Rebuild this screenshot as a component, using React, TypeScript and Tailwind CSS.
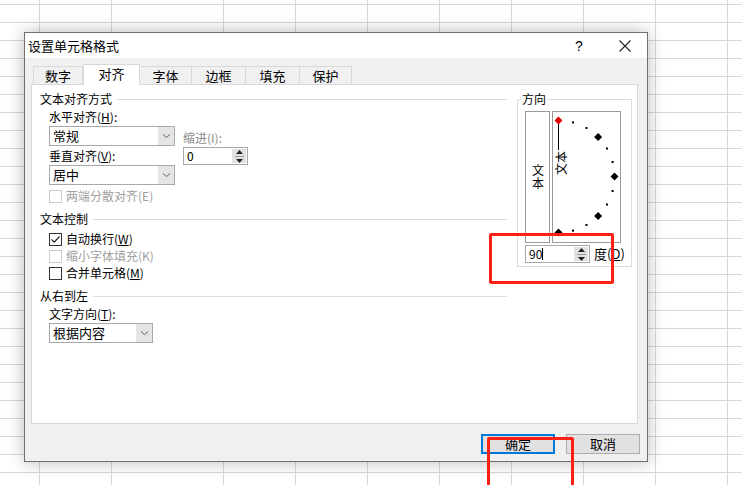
import React from 'react';

const gridCols = [40, 72, 112, 72, 72, 72, 72, 72, 72, 72, 72];

const Chevron = () => (
  <svg width="9" height="6" viewBox="0 0 9 6">
    <path d="M1 1.5 L4.5 4.5 L8 1.5" fill="none" stroke="#606060" strokeWidth="1" />
  </svg>
);

const Dropdown: React.FC<{ value: string; width: string }> = ({ value, width }) => (
  <div className={`${width} h-[20px] flex border border-[#a8a8a8] bg-white`}>
    <span className="flex-1 pl-[3px] leading-[18px] text-[13px]">{value}</span>
    <span className="w-[16px] h-full bg-[#e5e5e5] flex items-center justify-center">
      <Chevron />
    </span>
  </div>
);

const Spin: React.FC<{ value: string; width: string; caret?: boolean }> = ({ value, width, caret }) => (
  <div className={`${width} h-[18px] flex border border-[#a8a8a8] bg-white`}>
    <span className="flex-1 pl-[3px] leading-[16px] text-[12px] flex items-center">
      {value}
      {caret && <span className="w-px h-[12px] bg-black" />}
    </span>
    <span className="w-[14px] my-[1px] mr-[1px] bg-[#e1e1e1] flex flex-col items-center justify-center gap-[2px]">
      <svg width="7" height="4" viewBox="0 0 7 4"><path d="M3.5 0 L7 4 L0 4 Z" fill="#222" /></svg>
      <span className="w-[9px] h-px bg-[#9a9a9a]" />
      <svg width="7" height="4" viewBox="0 0 7 4"><path d="M0 0 L7 0 L3.5 4 Z" fill="#222" /></svg>
    </span>
  </div>
);

const Check: React.FC<{ label: React.ReactNode; checked?: boolean; disabled?: boolean }> = ({ label, checked, disabled }) => (
  <div className={`h-[14px] flex items-center gap-[4px] ${disabled ? 'text-[#a0a0a0]' : 'text-black'}`}>
    <span className={`w-[13px] h-[13px] border ${disabled ? 'border-[#cccccc]' : 'border-[#333333]'} bg-white flex items-center justify-center`}>
      {checked && (
        <svg width="11" height="11" viewBox="0 0 11 11">
          <path d="M1.5 5.5 L4.2 8.2 L9.5 2.5" fill="none" stroke="#222" strokeWidth="1.2" />
        </svg>
      )}
    </span>
    <span>{label}</span>
  </div>
);

const Section: React.FC<{ title: string }> = ({ title }) => (
  <div className="h-[14px] flex items-center gap-[5px]">
    <span>{title}</span>
    <span className="flex-1 h-px bg-[#dcdcdc]" />
  </div>
);

const Key: React.FC<{ k: string; underline?: boolean }> = ({ k, underline = true }) => (
  <>
    (<span className={underline ? 'underline' : ''}>{k}</span>)
  </>
);

const Dial = () => {
  const cx = 5.5;
  const cy = 64.5;
  const r = 56;
  const angles = Array.from({ length: 13 }, (_, i) => 90 - i * 15);
  return (
    <svg width="67" height="130" viewBox="0 0 67 130" className="overflow-hidden">
      <line x1={cx} y1={12} x2={cx} y2={38} stroke="#000" strokeWidth="1" />
      <text
        x={0}
        y={0}
        transform="translate(13 63) rotate(-90)"
        fontSize="12"
        fontFamily="'Noto Sans CJK SC', sans-serif"
        fill="#000"
      >
        文本
      </text>
      {angles.map((a) => {
        const rad = (a * Math.PI) / 180;
        const x = cx + r * Math.cos(rad);
        const y = cy - r * Math.sin(rad);
        if (a % 45 === 0) {
          return (
            <polygon
              key={a}
              points={`${x},${y - 4} ${x + 4},${y} ${x},${y + 4} ${x - 4},${y}`}
              fill={a === 90 ? '#e00000' : '#000'}
            />
          );
        }
        return <rect key={a} x={x - 1} y={y - 1} width="2" height="2" fill="#000" />;
      })}
    </svg>
  );
};

export default function App() {
  return (
    <div className="relative w-[742px] h-[485px] overflow-hidden bg-white font-['Noto_Sans_CJK_SC',sans-serif] text-[12px] leading-[14px] text-black">
      {/* spreadsheet behind */}
      <div className="absolute inset-0 flex bg-[linear-gradient(#d8d8d8_1px,transparent_1px)] bg-[length:100%_18px] bg-[position:0_4px]">
        {gridCols.map((w, i) => (
          <div key={i} className="h-full border-r border-[#d8d8d8] shrink-0" style={{ width: w }} />
        ))}
        <div className="flex-1" />
      </div>

      {/* dialog window */}
      <div className="absolute left-[24px] top-[32px] w-[624px] h-[430px] border border-[#6f6f6f] bg-[#f0f0f0] shadow-[0_0_16px_rgba(0,0,0,0.28)] flex flex-col">
        <div className="h-[25px] bg-white flex items-center pl-[3px] text-[13px]">
          <span>设置单元格格式</span>
          <span className="ml-auto w-[20px] text-center text-[14px] font-['Liberation_Sans',sans-serif]">?</span>
          <span className="ml-[24px] mr-[10px] w-[24px] flex justify-center">
            <svg width="12" height="12" viewBox="0 0 12 12">
              <path d="M0.5 0.5 L11.5 11.5 M11.5 0.5 L0.5 11.5" stroke="#222" strokeWidth="1.1" />
            </svg>
          </span>
        </div>

        {/* tabs */}
        <div className="mt-[6px] pl-[8px] h-[20px] flex items-end text-[13px]">
          <div className="w-[50px] h-[18px] border border-b-0 border-[#d9d9d9] flex items-center justify-center">数字</div>
          <div className="relative z-10 w-[57px] h-[21px] -mb-px bg-white border border-b-0 border-[#d9d9d9] flex items-center justify-center pb-[2px]">对齐</div>
          <div className="w-[52px] h-[18px] border border-b-0 border-l-0 border-[#d9d9d9] flex items-center justify-center">字体</div>
          <div className="w-[54px] h-[18px] border border-b-0 border-l-0 border-[#d9d9d9] flex items-center justify-center">边框</div>
          <div className="w-[54px] h-[18px] border border-b-0 border-l-0 border-[#d9d9d9] flex items-center justify-center">填充</div>
          <div className="w-[52px] h-[18px] border border-b-0 border-l-0 border-[#d9d9d9] flex items-center justify-center">保护</div>
        </div>

        {/* tab panel */}
        <div className="ml-[6px] w-[607px] h-[340px] border border-[#d9d9d9] bg-white pl-[8px] pt-[7px] flex">
          <div className="w-[467px] flex flex-col">
            <Section title="文本对齐方式" />
            <div className="pl-[9px] mt-[4px] flex">
              <div className="flex flex-col">
                <div className="h-[14px]">水平对齐<Key k="H" />:</div>
                <div className="mt-[2px]"><Dropdown value="常规" width="w-[126px]" /></div>
                <div className="h-[14px] mt-[3px]">垂直对齐<Key k="V" />:</div>
                <div className="mt-[2px]"><Dropdown value="居中" width="w-[126px]" /></div>
                <div className="mt-[4px]"><Check label={<>两端分散对齐<Key k="E" underline={false} /></>} disabled /></div>
              </div>
              <div className="ml-[8px] flex flex-col">
                <div className="h-[14px] mt-[21px] text-[#8c8c8c]">缩进<Key k="I" underline={false} />:</div>
                <div className="mt-[2px]"><Spin value="0" width="w-[65px]" /></div>
              </div>
            </div>

            <div className="mt-[9px]"><Section title="文本控制" /></div>
            <div className="pl-[9px] mt-[6px] flex flex-col gap-[3px]">
              <Check label={<>自动换行<Key k="W" /></>} checked />
              <Check label={<>缩小字体填充<Key k="K" underline={false} /></>} disabled />
              <Check label={<>合并单元格<Key k="M" /></>} />
            </div>

            <div className="mt-[9px]"><Section title="从右到左" /></div>
            <div className="pl-[9px] mt-[4px] flex flex-col">
              <div className="h-[14px]">文字方向<Key k="T" />:</div>
              <div className="mt-[2px]"><Dropdown value="根据内容" width="w-[104px]" /></div>
            </div>
          </div>

          {/* orientation group */}
          <fieldset className="ml-[10px] w-[115px] h-[175px] border border-[#dcdcdc] pl-[7px]">
            <legend className="-ml-[4px] px-[1px] h-[14px]">方向</legend>
            <div className="mt-[5px] flex gap-[2px]">
              <div className="w-[25px] h-[132px] border border-[#9a9a9a] flex items-center justify-center">
                <span className="[writing-mode:vertical-rl] [text-orientation:upright] tracking-[1px] leading-[14px]">文本</span>
              </div>
              <div className="w-[69px] h-[132px] border border-[#9a9a9a]">
                <Dial />
              </div>
            </div>
            <div className="mt-[2px] flex items-center gap-[4px]">
              <Spin value="90" width="w-[65px]" caret />
              <span className="text-[13px]">度<Key k="D" /></span>
            </div>
          </fieldset>
        </div>

        {/* buttons */}
        <div className="mt-[10px] pr-[7px] flex justify-end gap-[11px] text-[13px]">
          <button className="w-[74px] h-[20px] border-2 border-[#0078d7] bg-[#e1e1e1] flex items-center justify-center">确定</button>
          <button className="w-[74px] h-[20px] border border-[#adadad] bg-[#e1e1e1] flex items-center justify-center">取消</button>
        </div>
      </div>

      {/* red annotation marks */}
      <div className="absolute left-[489px] top-[233px] w-[125px] h-[51px] border-[3px] border-[#ff1f14] rounded-[2px]" />
      <div className="absolute left-[487px] top-[437px] w-[87px] h-[70px] border-[3px] border-[#ff1f14] rounded-[2px]" />
    </div>
  );
}
